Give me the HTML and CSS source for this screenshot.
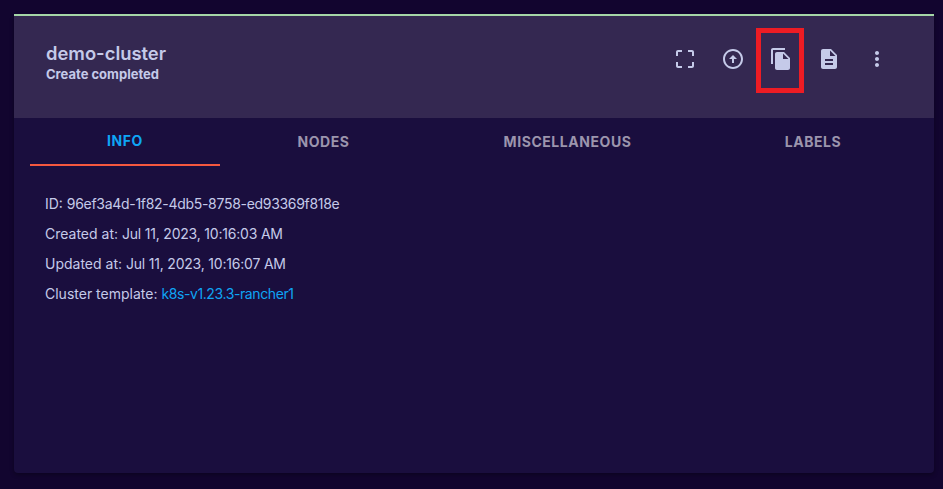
FILE: index.html
```html
<!DOCTYPE html>
<html lang="en">
  <head>
    <meta charset="UTF-8" />
    <title>demo-cluster</title>
    <link rel="stylesheet" href="styles.css">
  </head>
  <body>
    <div class="card">
      <div class="card-header">
        <div class="card-title">
          <div class="cluster-name">demo-cluster</div>
          <div class="cluster-state">Create completed</div>
        </div>
        <div class="actions">
          <button class="icon-btn">
            <svg viewBox="0 0 24 24"><path d="M5 15H3v4c0 1.1.9 2 2 2h4v-2H5v-4zM5 5h4V3H5c-1.1 0-2 .9-2 2v4h2V5zm14-2h-4v2h4v4h2V5c0-1.1-.9-2-2-2zm0 16h-4v2h4c1.1 0 2-.9 2-2v-4h-2v4z"/></svg>
          </button>
          <button class="icon-btn">
            <svg viewBox="0 0 24 24"><path d="M12 20c-4.41 0-8-3.59-8-8s3.59-8 8-8 8 3.59 8 8-3.59 8-8 8zm0-18C6.48 2 2 6.48 2 12s4.48 10 10 10 10-4.48 10-10S17.52 2 12 2zm-1 10v4h2v-4h3l-4-4-4 4h3z"/></svg>
          </button>
          <button class="icon-btn highlighted">
            <svg viewBox="0 0 24 24"><path d="M16 1H4c-1.1 0-2 .9-2 2v14h2V3h12V1zm-1 4l6 6v10c0 1.1-.9 2-2 2H7.99C6.89 23 6 22.1 6 21l.01-14c0-1.1.89-2 1.99-2h7zm-1 7h5.5L14 6.5V12z"/></svg>
          </button>
          <button class="icon-btn">
            <svg viewBox="0 0 24 24"><path d="M14 2H6c-1.1 0-1.99.9-1.99 2L4 20c0 1.1.89 2 1.99 2H18c1.1 0 2-.9 2-2V8l-6-6zm2 16H8v-2h8v2zm0-4H8v-2h8v2zm-3-5V3.5L18.5 9H13z"/></svg>
          </button>
          <button class="icon-btn">
            <svg viewBox="0 0 24 24"><path d="M12 8c1.1 0 2-.9 2-2s-.9-2-2-2-2 .9-2 2 .9 2 2 2zm0 2c-1.1 0-2 .9-2 2s.9 2 2 2 2-.9 2-2-.9-2-2-2zm0 6c-1.1 0-2 .9-2 2s.9 2 2 2 2-.9 2-2-.9-2-2-2z"/></svg>
          </button>
        </div>
      </div>

      <div class="tabs">
        <div class="tab active">INFO</div>
        <div class="tab">NODES</div>
        <div class="tab">MISCELLANEOUS</div>
        <div class="tab">LABELS</div>
      </div>

      <div class="info">
        <p>ID: <span class="info-id">96ef3a4d-1f82-4db5-8758-ed93369f818e</span></p>
        <p>Created at: <span class="info-date">Jul 11, 2023, 10:16:03 AM</span></p>
        <p>Updated at: <span class="info-date">Jul 11, 2023, 10:16:07 AM</span></p>
        <p>Cluster template: <a href="#">k8s-v1.23.3-rancher1</a></p>
      </div>
    </div>
  </body>
</html>
```

FILE: styles.css
```css
html,
body {
  height: 100%;
}

body {
  font-family: "Inter", "Liberation Sans", sans-serif;
  background-color: #12052f;
  color: #c5cae9;
  margin: 0;
  padding: 14px 9px 16px 14px;
  box-sizing: border-box;
  overflow: hidden;
}

.card {
  height: 100%;
  box-sizing: border-box;
  background-color: #1a0e3e;
  border-top: 2px solid #a5d6a7;
  border-radius: 0 0 4px 4px;
  box-shadow: 0 2px 4px rgba(0, 0, 0, 0.3);
}

.card-header {
  display: flex;
  justify-content: space-between;
  align-items: center;
  height: 102px;
  padding: 0 33px 16px 32px;
  box-sizing: border-box;
  background-color: #342851;
}

.card-title {
  padding-top: 6px;
}

.cluster-name {
  font-size: 18.4px;
  font-weight: 600;
  line-height: 24px;
  margin-bottom: 1px;
}

.cluster-state {
  font-size: 13px;
  font-weight: 700;
  line-height: 17px;
}

.actions {
  display: flex;
}

.icon-btn {
  position: relative;
  width: 48px;
  height: 48px;
  padding: 12px;
  border: none;
  background: none;
}

.icon-btn svg {
  display: block;
  width: 24px;
  height: 24px;
  fill: #c5cae9;
}

/* annotation drawn over the screenshot */
.highlighted::after {
  content: "";
  position: absolute;
  top: -7px;
  left: -1px;
  width: 48px;
  height: 65px;
  box-sizing: border-box;
  border: 5px solid #ed1c24;
}

.tabs {
  display: grid;
  grid-template-columns: 190px 207px 281px 210px;
  margin: 0 16px;
  height: 48px;
}

.tab {
  display: flex;
  justify-content: center;
  align-items: center;
  font-size: 14px;
  font-weight: 700;
  letter-spacing: 0.55px;
  color: #9c95ad;
  box-sizing: border-box;
  padding-bottom: 2px;
}

.tab.active {
  color: #0ea5f5;
  border-bottom: 2px solid #f4583f;
}

.info {
  padding: 23px 31px;
  font-size: 14px;
  line-height: 30px;
}

.info p {
  margin: 0;
}

.info-id {
  letter-spacing: -0.3px;
}

.info-date {
  letter-spacing: -0.2px;
}

.info a {
  color: #0ea5f5;
  letter-spacing: -0.4px;
  text-decoration: none;
}
```
